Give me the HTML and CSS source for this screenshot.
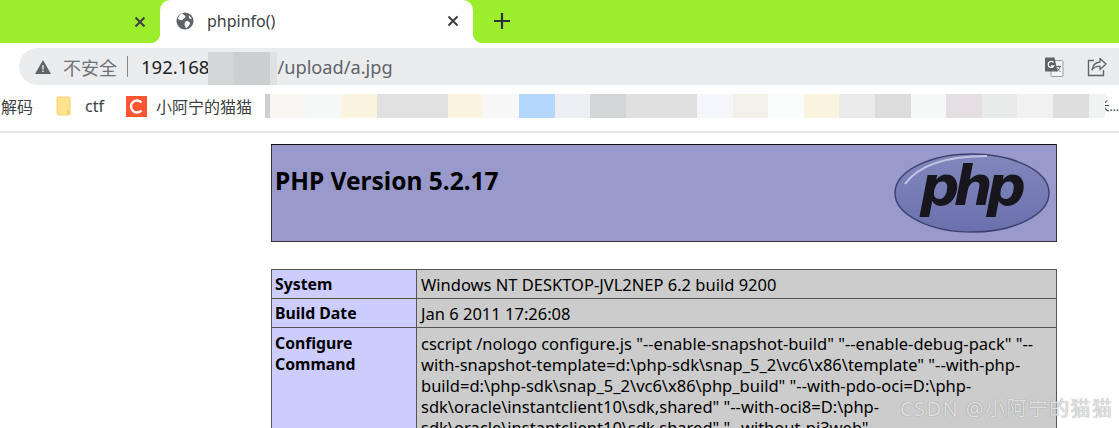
FILE: index.html
```html
<!DOCTYPE html>
<html lang="zh">
<head>
<meta charset="utf-8">
<title>phpinfo()</title>
<link rel="stylesheet" href="styles.css">
</head>
<body>
<header class="chrome">
  <div class="tabstrip">
    <div class="tab-idle">
      <svg class="ico-x" viewBox="0 0 12 12"><path d="M1.5 1.5l9 9M10.5 1.5l-9 9"/></svg>
    </div>
    <div class="tab-active">
      <svg class="globe" viewBox="0 0 20 20"><circle cx="10" cy="10" r="9.5" fill="#5f6368"/><path d="M7 1.5c1 2 3 2 3.500 3.500c0 2-3 2-3 4c-2 .5-4-.5-5.500-1.500c1-3 3-5 5-6zM11 10c2-.5 4 .5 4.500 2c0 2-1 3-2 4c-1 1-1.500 1.500-2.500 2c-.5-2-1.500-3-1.500-4.500c0-1.500 1-2.500 1.500-3.500zM14 3.500c1.500 1 3 2.500 3.500 4.500c-1.500 0-2.500-.5-3-1.500c0-1 0-2 -.5-3z" fill="#fff"/></svg>
      <span class="tab-title">phpinfo()</span>
      <svg class="ico-x" viewBox="0 0 12 12"><path d="M1.500 1.500l9 9M10.500 1.500l-9 9"/></svg>
    </div>
    <svg class="ico-plus" viewBox="0 0 16 16"><path d="M8 0v16M0 8h16"/></svg>
  </div>

  <div class="toolbar">
    <div class="omnibox">
      <svg class="warn" viewBox="0 0 16 14"><path d="M8 0L16 14H0z" fill="#5f6368"/><path d="M7.300 5h1.400v4.600H7.300zM7.300 10.600h1.400v1.500H7.300z" fill="#ebecee"/></svg>
      <span class="insecure">不安全</span>
      <span class="sep"></span>
      <span class="host">192.168</span>
      <span class="smudge">
        <i class="sm1"></i><i class="sm2"></i><i class="sm3"></i>
      </span>
      <span class="path">/upload/a.jpg</span>
      <span class="omni-actions">
        <svg class="translate" viewBox="0 0 20 20"><rect x="7" y="3.500" width="12" height="16" rx="1" fill="#f4f4f5" stroke="#9a9da1"/><path d="M1 1.500C1 .8 1.500.5 2 .5h8.500l3 14H2c-.6 0-1-.5-1-1z" fill="#5f6368"/><path d="M9.500 5.500a3 3 0 1 0 .4 3.300H7" fill="none" stroke="#fff" stroke-width="1.200"/><path d="M12 9.500h5M14.500 8.500v1M16 9.500c-.5 2.500-2 4-3.500 5M13 11c.7 1.600 2 3 3.500 3.500" fill="none" stroke="#5f6368"/></svg>
        <svg class="share" viewBox="0 0 20 20"><path d="M7 3.500H1.500v15h15V13" fill="none" stroke="#5f6368" stroke-width="1.400"/><path d="M13 1.500l6 5.500-6 5.500V9.500c-3.500-.5-6 .5-8 3.500c.5-4.500 3.500-7.500 8-8z" fill="none" stroke="#5f6368" stroke-width="1.300" stroke-linejoin="round"/></svg>
      </span>
    </div>
  </div>

  <nav class="bookmarks">
    <span class="bm bm-jie">解码</span>
    <span class="bm bm-ctf">
      <svg class="folder" viewBox="0 0 15 20"><path d="M1 1h11a2 2 0 0 1 2 2v14a2 2 0 0 1-2 2H3a2 2 0 0 1-2-2z" fill="#ffe38e" stroke="#f6d26b"/><rect x="11" y="14" width="3" height="5" fill="#f6d26b"/></svg>
      <span>ctf</span>
    </span>
    <span class="bm bm-blog">
      <svg class="clogo" viewBox="0 0 21 21"><rect width="21" height="21" fill="#fc5531"/><path d="M15.500 6.500A6 6 0 1 0 15.500 14.500" fill="none" stroke="#fff" stroke-width="2.400"/></svg>
      <span>小阿宁的猫猫</span>
    </span>
    <div class="blur-strip">
      <i class="b0"></i><i class="c1"></i><i class="c2"></i><i class="c3"></i><i class="c4"></i><i class="c5"></i><i class="c6"></i><i class="c7"></i><i class="c8"></i><i class="c9"></i><i class="c10"></i><i class="c11"></i><i class="c12"></i><i class="c13"></i><i class="c14"></i><i class="c15"></i><i class="c16"></i><i class="c17"></i><i class="c18"></i><i class="c19"></i><i class="c20"></i><i class="c21"></i><i class="c22"></i><i class="c23"></i><i class="c24"></i>
    </div>
    <span class="bm-overflow">长…</span>
  </nav>
</header>

<main class="page">
  <table class="php-head">
    <tr>
      <td class="head-cell">
        <div class="head-row">
          <h1>PHP Version 5.2.17</h1>
          <svg class="php-logo" viewBox="0 0 158 86">
            <defs>
              <linearGradient id="ov" x1="0" y1="0" x2="0" y2="1"><stop offset="0" stop-color="#8288bd"/><stop offset="1" stop-color="#6a70ad"/></linearGradient>
            </defs>
            <ellipse cx="79" cy="43" rx="77" ry="39" fill="url(#ov)" stroke="#3f4270" stroke-width="1.500"/>
            <path d="M12 34C28 12 60 6 94 6" fill="none" stroke="#c3c6e2" stroke-width="2"/>
            <text x="77" y="55" class="php-word">php</text>
          </svg>
        </div>
      </td>
    </tr>
  </table>

  <table class="php-info">
    <tr><th>System</th><td>Windows NT DESKTOP-JVL2NEP 6.2 build 9200</td></tr>
    <tr><th>Build Date</th><td>Jan 6 2011 17:26:08</td></tr>
    <tr class="config-row">
      <th>Configure Command</th>
      <td>cscript /nologo configure.js "--enable-snapshot-build" "--enable-debug-pack" "--<br>with-snapshot-template=d:\php-sdk\snap_5_2\vc6\x86\template" "--with-php-<br>build=d:\php-sdk\snap_5_2\vc6\x86\php_build" "--with-pdo-oci=D:\php-<br>sdk\oracle\instantclient10\sdk,shared" "--with-oci8=D:\php-<br>sdk\oracle\instantclient10\sdk,shared" "--without-pi3web"</td>
    </tr>
  </table>
</main>

<div class="watermark">CSDN @小阿宁的猫猫</div>
</body>
</html>
```

FILE: styles.css
```css
* { box-sizing: border-box; }
html, body { margin: 0; padding: 0; height: 100%; overflow: hidden; background: #fff; }
body { font-family: "Noto Sans", "Noto Sans CJK SC", sans-serif; color: #000; position: relative; }

/* tab strip */
.tabstrip { display: flex; align-items: stretch; height: 43px; background: #9def2e; }
.tab-idle { width: 160px; display: flex; align-items: center; justify-content: flex-end; padding-right: 14px; }
.ico-x { width: 12px; height: 12px; fill: none; stroke: #3c4043; stroke-width: 2; }
.tab-active { position: relative; width: 313px; background: #fff; border-radius: 10px 10px 0 0; display: flex; align-items: center; padding: 0 14px 2px 16px; }
.tab-active::before, .tab-active::after { content: ""; position: absolute; bottom: 0; width: 10px; height: 10px; }
.tab-active::before { left: -10px; background: radial-gradient(circle at 0 0, #9def2e 10px, #fff 10.500px); }
.tab-active::after { right: -10px; background: radial-gradient(circle at 100% 0, #9def2e 10px, #fff 10.500px); }
.globe { width: 18px; height: 18px; flex: none; }
.tab-title { margin-left: 13px; flex: 1; font-size: 16px; color: #3c4043; }
.ico-plus { width: 16px; height: 16px; margin: 13px 0 0 21px; fill: none; stroke: #2c3034; stroke-width: 2.200; }

/* toolbar */
.toolbar { padding: 5px 0 0 19px; height: 42px; }
.omnibox { height: 37px; background: #ebecee; border-radius: 19px 0 0 19px; display: flex; align-items: center; padding-left: 16px; }
.warn { width: 16px; height: 14px; flex: none; }
.insecure { margin-left: 12px; font-size: 18px; color: #6f7276; }
.sep { width: 1px; height: 21px; background: #80868b; margin: 0 13px 0 10px; }
.host { font-size: 18.500px; color: #202124; }
.path { font-size: 18.200px; color: #5f6368; }
.smudge { display: flex; height: 33px; margin: 4px 0 0 -1px; align-self: flex-start; }
.smudge i { display: block; height: 33px; }
.sm1 { width: 26px; background: #d4d5d6; }
.sm2 { width: 36px; background: #cdced0; }
.sm3 { width: 7px; background: #e0e1e2; }
.omni-actions { margin-left: auto; display: flex; align-items: center; gap: 23px; padding-right: 12px; }
.translate { width: 20px; height: 20px; }
.share { width: 20px; height: 20px; }

/* bookmarks */
.bookmarks { height: 48px; display: flex; align-items: center; padding-bottom: 4px; border-bottom: 2px solid #e4e5e6; font-size: 16px; color: #3c4043; overflow: hidden; }
.bm { display: flex; align-items: center; white-space: nowrap; }
.bm-jie { margin-left: 1px; width: 55px; }
.bm-ctf { width: 70px; gap: 14px; }
.bm-blog { width: 139px; gap: 9px; }
.folder { width: 15px; height: 20px; }
.clogo { width: 21px; height: 21px; }
.blur-strip { display: flex; height: 24px; flex: none; z-index: 1; }
.blur-strip i { display: block; width: 35.600px; }
.blur-strip .b0 { width: 5px; background: #cfcfcf; }
.c1 { background: #f8f6f0; } .c2 { background: #f6f8f8; } .c3 { background: #faf4e0; }
.c4 { background: #e1e1e1; } .c5 { background: #e1e1e1; } .c6 { background: #faf4e0; }
.c7 { background: #f7f7f7; } .c8 { background: #b3d7fd; } .c9 { background: #eceef2; }
.c10 { background: #d4d5d7; } .c11 { background: #e0e0e0; } .c12 { background: #e0e0e0; }
.c13 { background: #f5f6fa; } .c14 { background: #f1f1ea; } .c15 { background: #fbfcfc; }
.c16 { background: #f9f3e0; } .c17 { background: #ebebeb; } .c18 { background: #dcdcdc; }
.c19 { background: #f6f8f7; } .c20 { background: #e4dfe3; } .c21 { background: #e9ebea; }
.c22 { background: #f1f1f1; } .c23 { background: #dedede; }
.blur-strip .c24 { width: 16px; background: #f1f3f2; }
.bm-overflow { font-size: 12px; margin-left: -7px; white-space: nowrap; }

/* page */
.page { padding: 11px 0 0 271px; }
table { border-collapse: collapse; width: 786px; }
.php-head td { background: #9999cc; border: 1px solid #333; height: 97px; padding: 0; vertical-align: top; border-top-color: #111; }
.head-row { display: flex; justify-content: space-between; padding: 19px 5px 0 3px; }
h1 { margin: 0; font-size: 24.500px; font-weight: 700; line-height: 33px; }
.php-logo { width: 158px; height: 86px; margin-top: -14px; }
.php-word { font-family: "DejaVu Sans", sans-serif; font-size: 55px; font-weight: 700; font-style: italic; text-anchor: middle; fill: #17161c; letter-spacing: -6px; }
.php-info { margin-top: 27px; font-size: 16.500px; line-height: 21px; }
.php-info th, .php-info td { border: 1px solid #555; padding: 4px 4px 3px 3px; vertical-align: top; text-align: left; }
.php-info td { padding-left: 4px; }
.php-info th { width: 145px; background: #ccccff; font-size: 15.800px; font-weight: 700; }
.php-info td { background: #cccccc; }
.php-info .config-row th, .php-info .config-row td { padding-top: 5px; }

.watermark { position: absolute; left: 900px; top: 393px; font-size: 20px; letter-spacing: 1.400px; color: rgba(240,240,240,.85); text-shadow: 0 0 1px rgba(110,110,110,.85); white-space: nowrap; }
```
